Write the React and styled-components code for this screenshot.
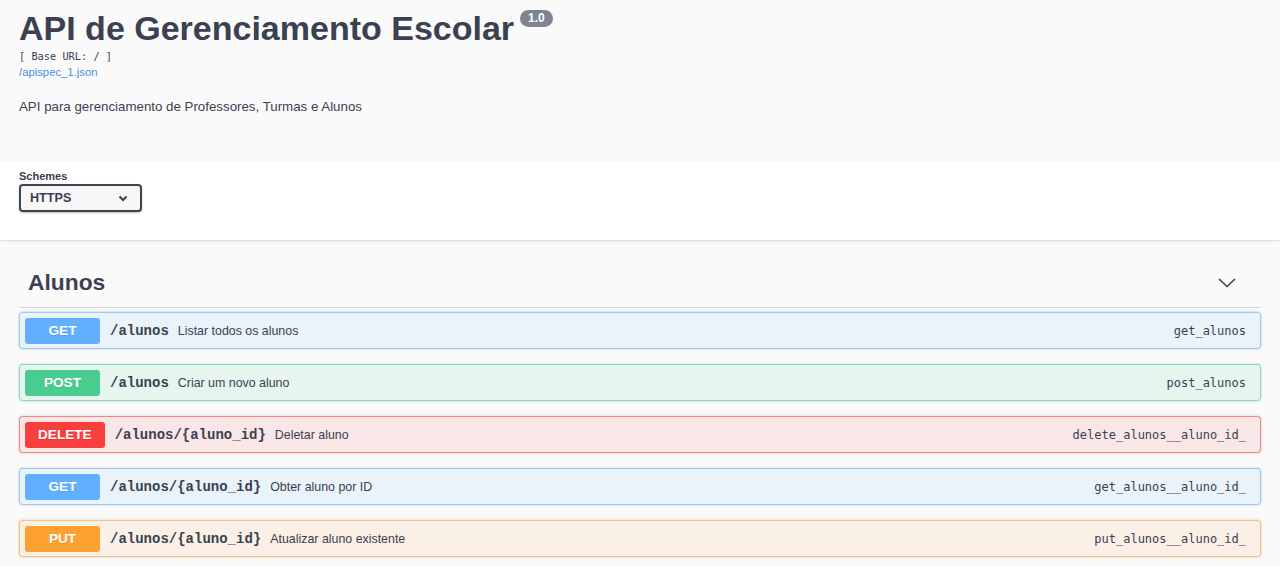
import React from "react";
import styled, { createGlobalStyle } from "styled-components";

const GlobalStyle = createGlobalStyle`
  html, body {
    margin: 0;
    padding: 0;
    background: #fafafa;
    font-family: "Liberation Sans", Arial, sans-serif;
    color: #3b4151;
  }
`;

const Info = styled.div`
  padding: 8px 19px 45px;
`;

const TitleRow = styled.div`
  display: flex;
  align-items: flex-start;
  gap: 6px;
`;

const Title = styled.h2`
  margin: 0;
  font-size: 34px;
  font-weight: 700;
  line-height: 40px;
  color: #3b4151;
`;

const Version = styled.span`
  margin-top: 2px;
  background: #7d8492;
  color: #fff;
  font-size: 12px;
  font-weight: 700;
  border-radius: 57px;
  padding: 2px 8px 2px;
  line-height: 13px;
`;

const BaseUrl = styled.pre`
  margin: 1px 0 0;
  font-family: "DejaVu Sans Mono", monospace;
  font-size: 10.3px;
  line-height: 14px;
  color: #3b4151;
`;

const SpecLink = styled.a`
  display: block;
  margin-top: 1px;
  font-size: 11.3px;
  line-height: 16px;
  color: #4990e2;
  text-decoration: none;
`;

const Description = styled.p`
  margin: 18px 0 0;
  font-size: 13.3px;
  line-height: 18px;
  color: #3b4151;
`;

const SchemeContainer = styled.section`
  background: #fff;
  box-shadow: 0 1px 2px 0 rgba(0, 0, 0, 0.15);
  padding: 8px 19px 28px;
`;

const SchemeLabel = styled.label`
  display: block;
  font-size: 11px;
  font-weight: 700;
  line-height: 14px;
  margin-bottom: 1px;
  color: #3b4151;
`;

const Select = styled.div`
  box-sizing: border-box;
  width: 123px;
  height: 28px;
  border: 2px solid #41444e;
  border-radius: 4px;
  background: #f7f7f7;
  box-shadow: 0 1px 2px 0 rgba(0, 0, 0, 0.25);
  display: flex;
  align-items: center;
  justify-content: space-between;
  padding: 0 12px 0 9px;
  font-size: 12.6px;
  font-weight: 700;
  color: #3b4151;
`;

const Tags = styled.div`
  padding: 25px 19px 0;
`;

const TagHeader = styled.div`
  box-sizing: border-box;
  display: flex;
  align-items: center;
  justify-content: space-between;
  height: 43px;
  padding: 0 25px 7px 9px;
  border-bottom: 1px solid rgba(59, 65, 81, 0.2);
  margin-bottom: 4px;
`;

const TagTitle = styled.h3`
  margin: 0;
  font-size: 22.8px;
  font-weight: 700;
  color: #3b4151;
`;

const colors = {
  GET: "97, 175, 254",
  POST: "73, 204, 144",
  DELETE: "249, 62, 62",
  PUT: "252, 161, 48",
};

const OpBlock = styled.div`
  box-sizing: border-box;
  height: 37px;
  margin-bottom: 15px;
  border: 1px solid rgba(${(p) => colors[p.$method]}, 0.6);
  border-radius: 4px;
  background: rgba(${(p) => colors[p.$method]}, 0.1);
  box-shadow: 0 0 3px rgba(0, 0, 0, 0.19);
  display: flex;
  align-items: center;
  padding: 0 14px 0 5px;
`;

const Method = styled.span`
  box-sizing: border-box;
  min-width: 75px;
  height: 26px;
  padding: 0 13px;
  border-radius: 3px;
  background: rgb(${(p) => colors[p.$method]});
  color: #fff;
  font-size: 13.6px;
  font-weight: 700;
  text-shadow: 0 1px 0 rgba(0, 0, 0, 0.1);
  display: flex;
  align-items: center;
  justify-content: center;
`;

const Path = styled.span`
  margin-left: 10px;
  font-family: "Liberation Mono", monospace;
  font-size: 14px;
  font-weight: 700;
  color: #3b4151;
`;

const Summary = styled.span`
  margin-left: 9px;
  font-size: 12.4px;
  color: #3b4151;
  flex: 1;
`;

const OperationId = styled.span`
  font-family: "DejaVu Sans Mono", monospace;
  font-size: 12px;
  color: #3b4151;
`;

const ops = [
  { method: "GET", path: "/alunos", summary: "Listar todos os alunos", id: "get_alunos" },
  { method: "POST", path: "/alunos", summary: "Criar um novo aluno", id: "post_alunos" },
  { method: "DELETE", path: "/alunos/{aluno_id}", summary: "Deletar aluno", id: "delete_alunos__aluno_id_" },
  { method: "GET", path: "/alunos/{aluno_id}", summary: "Obter aluno por ID", id: "get_alunos__aluno_id_" },
  { method: "PUT", path: "/alunos/{aluno_id}", summary: "Atualizar aluno existente", id: "put_alunos__aluno_id_" },
];

export default function App() {
  return (
    <>
      <GlobalStyle />
      <Info>
        <TitleRow>
          <Title>API de Gerenciamento Escolar</Title>
          <Version>1.0</Version>
        </TitleRow>
        <BaseUrl>[ Base URL: / ]</BaseUrl>
        <SpecLink href="#">/apispec_1.json</SpecLink>
        <Description>API para gerenciamento de Professores, Turmas e Alunos</Description>
      </Info>
      <SchemeContainer>
        <SchemeLabel>Schemes</SchemeLabel>
        <Select>
          HTTPS
          <svg width="10" height="7" viewBox="0 0 10 7">
            <path d="M1.5 1.5 L5 5 L8.5 1.5" fill="none" stroke="#3b4151" strokeWidth="2" />
          </svg>
        </Select>
      </SchemeContainer>
      <Tags>
        <TagHeader>
          <TagTitle>Alunos</TagTitle>
          <svg width="18" height="10" viewBox="0 0 18 10">
            <path d="M1 1 L9 8.5 L17 1" fill="none" stroke="#3b4151" strokeWidth="1.6" />
          </svg>
        </TagHeader>
        {ops.map((op) => (
          <OpBlock key={op.id} $method={op.method}>
            <Method $method={op.method}>{op.method}</Method>
            <Path>{op.path}</Path>
            <Summary>{op.summary}</Summary>
            <OperationId>{op.id}</OperationId>
          </OpBlock>
        ))}
      </Tags>
    </>
  );
}
